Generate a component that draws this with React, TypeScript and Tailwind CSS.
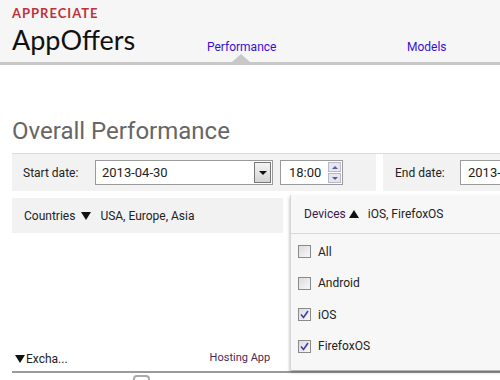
import React from "react";

function Check({ checked }: { checked?: boolean }) {
  return (
    <span className="flex h-[13px] w-[13px] flex-none items-center justify-center border border-[#8a8a8a] bg-gradient-to-br from-[#dcdcdc] to-[#f8f8f8]">
      {checked && (
        <svg width="9" height="9" viewBox="0 0 9 9">
          <path d="M1 4.5 L3.5 7.5 L8 1" fill="none" stroke="#3b3bb8" strokeWidth="1.6" />
        </svg>
      )}
    </span>
  );
}

const devices = [
  { name: "All", checked: false },
  { name: "Android", checked: false },
  { name: "iOS", checked: true },
  { name: "FirefoxOS", checked: true },
];

export default function App() {
  return (
    <div className="relative h-[380px] w-[500px] overflow-hidden bg-white font-['Roboto',sans-serif] text-[12px] text-[#222]">
      {/* header */}
      <div className="relative flex h-[65px] items-start border-b-[3px] border-[#c8c8c8] bg-[#f6f6f6]">
        <div className="flex flex-col pl-[12px] pt-[6px] font-['Lato',sans-serif]">
          <span className="text-[13px] font-bold leading-[15px] tracking-[1px] text-[#c0303a]">APPRECIATE</span>
          <span className="mt-[1px] text-[27px] leading-[36px] text-[#111]">AppOffers</span>
        </div>
        <div className="absolute left-[207px] top-[38px] text-[12px] text-[#3a10d0]">Performance</div>
        <div className="absolute left-[407px] top-[38px] text-[12px] text-[#3a10d0]">Models</div>
        <div className="absolute left-[232px] top-[54px] h-0 w-0 border-x-[9px] border-b-[8px] border-x-transparent border-b-[#c8c8c8]" />
      </div>

      <div className="pl-[12px] pt-[53px] text-[24px] leading-[26px] text-[#666]">Overall Performance</div>

      {/* date row */}
      <div className="ml-[12px] mt-[9px] flex h-[38px] border-t border-[#dcdcdc]">
        <div className="flex w-[364px] flex-none items-center bg-[#f2f2f2] pl-[11px]">
          <span className="w-[72px]">Start date:</span>
          <div className="flex h-[25px] w-[178px] items-center justify-between border border-[#9a9a9a] bg-white pl-[6px] pr-[1px] text-[13px]">
            <span>2013-04-30</span>
            <span className="flex h-[21px] w-[17px] items-center justify-center border border-[#777] bg-gradient-to-b from-[#f4f4f4] to-[#d4d4d4]">
              <span className="h-0 w-0 border-x-[4px] border-t-[4px] border-x-transparent border-t-[#111]" />
            </span>
          </div>
          <div className="ml-[7px] flex h-[25px] w-[63px] items-center justify-between border border-[#9a9a9a] bg-white pl-[8px] pr-[1px] text-[13px]">
            <span>18:00</span>
            <span className="flex flex-col gap-[1px]">
              <span className="flex h-[10px] w-[13px] items-center justify-center border border-[#b8b8c8] bg-[#e6e6ee]">
                <span className="h-0 w-0 border-x-[3px] border-b-[3px] border-x-transparent border-b-[#5a5aa0]" />
              </span>
              <span className="flex h-[10px] w-[13px] items-center justify-center border border-[#b8b8c8] bg-[#e6e6ee]">
                <span className="h-0 w-0 border-x-[3px] border-t-[3px] border-x-transparent border-t-[#5a5aa0]" />
              </span>
            </span>
          </div>
        </div>
        <div className="ml-[7px] flex min-w-0 flex-1 items-center overflow-hidden bg-[#f2f2f2] pl-[12px]">
          <span className="w-[65px] flex-none">End date:</span>
          <div className="flex h-[25px] w-[60px] flex-none items-center overflow-hidden border border-[#9a9a9a] bg-white pl-[7px] text-[13px]">
            <span className="whitespace-nowrap">2013-04-30</span>
          </div>
        </div>
      </div>

      {/* filters row */}
      <div className="ml-[12px] mt-[7px] flex h-[35px] w-[271px] items-center bg-[#f2f2f2] pl-[12px]">
        <span>Countries</span>
        <span className="ml-[6px] h-0 w-0 border-x-[5px] border-t-[8px] border-x-transparent border-t-[#111]" />
        <span className="ml-[9px]">USA, Europe, Asia</span>
      </div>

      {/* bottom */}
      <div className="mt-[116px] flex h-[19px] items-center pl-[15px] text-[12px]">
        <span className="h-0 w-0 border-x-[5px] border-t-[8px] border-x-transparent border-t-[#111]" />
        <span className="ml-[1px]">Excha...</span>
        <span className="ml-[142px] text-[11px] text-[#4a2a58]">Hosting App</span>
      </div>
      <div className="ml-[12px] mt-[3px] h-[2px] bg-[#9a9a9a]" />
      <div className="ml-[133px] mt-[2px] h-[6px] w-[17px] rounded-t-[4px] border-x-2 border-t-2 border-[#aaa]" />

      {/* devices dropdown */}
      <div className="absolute left-[290px] top-[195px] w-[230px] border-l border-[#d8d8d8] bg-[#f7f7f7] shadow-[0_2px_3px_rgba(0,0,0,0.35)]">
        <div className="flex h-[39px] items-center border-b border-[#d8d8d8] pl-[13px]">
          <span className="text-[#3a1850]">Devices</span>
          <span className="ml-[3px] h-0 w-0 border-x-[5px] border-b-[8px] border-x-transparent border-b-[#111]" />
          <span className="ml-[9px]">iOS, FirefoxOS</span>
        </div>
        <div className="flex flex-col pb-[8px] pt-[2px]">
          {devices.map((d) => (
            <div key={d.name} className="flex h-[31.5px] items-center gap-[7px] pl-[7px]">
              <Check checked={d.checked} />
              <span>{d.name}</span>
            </div>
          ))}
        </div>
      </div>
    </div>
  );
}
